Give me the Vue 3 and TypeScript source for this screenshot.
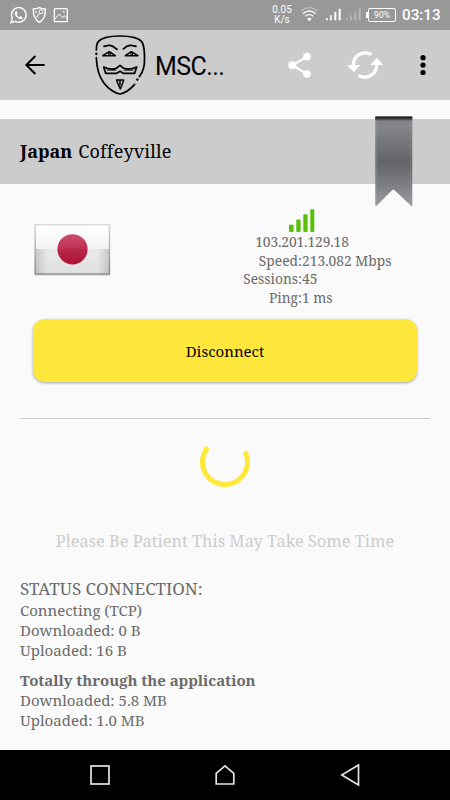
<script setup lang="ts">
interface Stat {
  label: string
  value: string
}

const stats: Stat[] = [
  { label: 'Speed:', value: '213.082 Mbps' },
  { label: 'Sessions:', value: '45' },
  { label: 'Ping:', value: '1 ms' },
]
const session: string[] = ['Connecting (TCP)', 'Downloaded: 0 B', 'Uploaded: 16 B']
const totals: string[] = ['Downloaded: 5.8 MB', 'Uploaded: 1.0 MB']
</script>

<template>
  <div class="screen">
    <header class="status">
      <div class="notices">
        <svg width="64" height="22" viewBox="24 12 192 66" fill="none" stroke="#fff" stroke-width="4">
          <path d="M33 68l4-13a22 22 0 1 1 9 9z" />
          <path d="M47 34c-5 4-3 12 4 18s15 9 18 2l-7-6-4 4c-4-2-7-5-8-9l3-3-3-7z" fill="#fff" stroke="none" />
          <path d="M118 23c7 4 12 4 18 4 1 18-4 32-18 40-14-8-19-22-18-40 6 0 11 0 18-4z" />
          <circle cx="123" cy="35" r="6" stroke-width="3" />
          <path d="M119 40l-11 13M112 49l4 4M104 34l8 5" stroke-width="3" />
          <rect x="163" y="26" width="39" height="39" rx="3" />
          <path d="M165 57l13-15 10 11 5-6 8 9" stroke-width="3" />
          <circle cx="191" cy="35" r="2.5" fill="#fff" stroke="none" />
        </svg>
      </div>
      <div class="indicators">
        <div class="rate"><span>0.05</span><span>K/s</span></div>
        <svg class="radio" width="62" height="18" viewBox="225 20 186 54">
          <g fill="none" stroke="#fff" stroke-width="4">
            <path d="M228 35q25-20 50 0" opacity=".4" />
            <path d="M234 43q19-16 38 0" />
            <path d="M241 51q12-10 24 0" />
          </g>
          <path d="M246 58q7-5 14 0l-7 8z" fill="#fff" />
          <path d="M303 56h5v7h-5zM315 48h5v15h-5zM328 38h6v25h-6zM341 28h6v35h-6z" fill="#fff" />
          <path d="M363 56h5v7h-5zM375 48h5v15h-5zM388 38h6v25h-6zM401 28h6v35h-6z" fill="#fff" opacity=".32" />
        </svg>
        <div class="battery">90%</div>
        <div class="clock">03:13</div>
      </div>
    </header>

    <nav class="toolbar">
      <svg class="back" width="22" height="22" viewBox="73 162 66 66" fill="none" stroke="#000" stroke-width="6">
        <path d="M135 195H81M107 168l-27 27 27 27" />
      </svg>
      <svg class="mask" width="52" height="62" viewBox="27 12 156 186" fill="none" stroke="#000" stroke-width="5.2" stroke-linecap="round" stroke-linejoin="round">
        <path d="M34 60c0-9 1-18 5-24 10-13 38-18 66-18s56 5 66 18c9 15 9 60 5 77-3 13-8 21-13 27" />
        <path d="M34 83c1 29 8 56 22 75 15 20 37 33 49 34 14-3 31-14 44-29" />
        <path d="M34 71v1M157 149l.5-.5" stroke-width="7" />
        <path d="M57 49l14-3c10-1 16 4 25 12M115 57c8-8 15-12 24-11l14 3" />
        <path d="M53 77l20-12 18 12zM121 77l18-12 20 12z" stroke-width="4.500" />
        <circle cx="73" cy="72" r="3" stroke-width="3" />
        <circle cx="140" cy="72" r="3" stroke-width="3" />
        <path d="M56 111c14 7 30 7 38 4l11-9 11 9c9 3 25 3 39-4l-6 19h-34l-10-6-10 6H62z" />
        <path d="M66 121h26M118 121h26" stroke-width="2" />
        <path d="M95 150h21l-4 12-6 15-7-15zM105 152v12" stroke-width="4.500" />
      </svg>
      <h1>MSC...</h1>
      <svg class="share" width="24" height="27" viewBox="190 155 72 81" fill="#fff" stroke="#fff">
        <path d="M247 169l-44 26 44 26" fill="none" stroke-width="7" />
        <g stroke="none"><circle cx="247" cy="169" r="11.5" /><circle cx="203" cy="195" r="12" /><circle cx="247" cy="221" r="11.5" /></g>
      </svg>
      <svg class="refresh" width="38" height="30" viewBox="363 150 114 90" fill="none" stroke="#fff" stroke-width="10">
        <path d="M385 198c-1-25 18-42 41-39q7 1 13 5" />
        <path d="M455 192c1 25-18 42-41 39q-7-1-13-5" />
        <path d="M366 195h40l-20 21zM435 195h40l-19-21z" fill="#fff" stroke="none" />
      </svg>
      <svg class="more" width="6" height="22" viewBox="0 0 6 22"><circle cx="3" cy="3.700" r="2.600" /><circle cx="3" cy="11.100" r="2.600" /><circle cx="3" cy="18.500" r="2.600" /></svg>
    </nav>

    <section class="place">
      <b>Japan</b><span>Coffeyville</span>
      <svg class="ribbon" width="38" height="91" viewBox="0 0 38 91">
        <defs>
          <linearGradient id="cloth" x1="0" y1="0" x2="0" y2="1">
            <stop offset="0" stop-color="#77787b" />
            <stop offset=".1" stop-color="#85868a" />
            <stop offset=".5" stop-color="#636468" />
            <stop offset=".78" stop-color="#7f8085" />
            <stop offset="1" stop-color="#9a9b9f" />
          </linearGradient>
        </defs>
        <path d="M.3 .5h37v89.500h-1L19.300 74Q18.300 73 17.300 74L1.300 90h-1z" fill="url(#cloth)" />
        <path d="M.3 .5h37v2.200H.3z" fill="#1d1e20" />
        <path d="M.3 2.700h37v1.500H.3z" fill="#505154" />
        <path d="M1.800 5v81M35.800 5v81" stroke="#a4a5a8" stroke-width=".7" stroke-dasharray="1.300 1.300" />
      </svg>
    </section>

    <main>
      <section class="server">
        <svg class="flag" width="78" height="54" viewBox="0 0 78 54">
          <defs>
            <linearGradient id="paper" x1="0" y1="0" x2="0" y2="1">
              <stop offset="0" stop-color="#fff" /><stop offset=".48" stop-color="#f3f3f3" />
              <stop offset=".5" stop-color="#e9e9e9" /><stop offset="1" stop-color="#e0e0e0" />
            </linearGradient>
            <linearGradient id="edge" x1="0" y1="0" x2="0" y2="1">
              <stop offset="0" stop-color="#d5d5d5" /><stop offset="1" stop-color="#858585" />
            </linearGradient>
            <linearGradient id="sun" x1="0" y1="0" x2="0" y2="1">
              <stop offset="0" stop-color="#cc4e6c" /><stop offset=".49" stop-color="#bd2f53" />
              <stop offset=".51" stop-color="#b8274a" /><stop offset="1" stop-color="#ac1237" />
            </linearGradient>
            <linearGradient id="shade">
              <stop offset="0" stop-color="#888" stop-opacity=".35" /><stop offset=".16" stop-color="#888" stop-opacity="0" />
              <stop offset=".84" stop-color="#888" stop-opacity="0" /><stop offset="1" stop-color="#888" stop-opacity=".35" />
            </linearGradient>
          </defs>
          <rect x="1.400" y="2" width="76" height="51" rx="1" fill="#000" opacity=".1" />
          <rect x="2.500" y="2" width="74" height="49" fill="url(#paper)" />
          <rect x="2.500" y="26" width="74" height="25" fill="url(#shade)" />
          <rect x="2.200" y="1.700" width="74.200" height="49.300" fill="none" stroke="url(#edge)" stroke-width="1.300" />
          <circle cx="39.500" cy="26.300" r="15.100" fill="url(#sun)" />
        </svg>
        <div class="info">
          <svg class="bars" width="26" height="23" viewBox="0 0 26 23" fill="#5bbf0a">
            <rect x="0" y="15.700" width="4.600" height="7.200" rx="1" /><rect x="7.300" y="10.500" width="4.300" height="12.400" rx="1" />
            <rect x="14.300" y="5.300" width="4.300" height="17.600" rx="1" /><rect x="21.300" y=".3" width="4" height="22.600" rx="1" />
          </svg>
          <div class="ip">103.201.129.18</div>
          <dl>
            <template v-for="s in stats" :key="s.label">
              <dt>{{ s.label }}</dt>
              <dd>{{ s.value }}</dd>
            </template>
          </dl>
        </div>
      </section>

      <button class="action" type="button">Disconnect</button>
      <hr />
      <svg class="spinner" width="52" height="52" viewBox="0 0 52 52" fill="none" stroke="#ffe83b" stroke-width="5">
        <path d="M8.900 11.300A22.500 22.500 0 1 0 46 15.700" />
      </svg>
      <p class="wait">Please Be Patient This May Take Some Time</p>

      <section class="report">
        <h2>STATUS CONNECTION:</h2>
        <p v-for="line in session" :key="line">{{ line }}</p>
        <h3>Totally through the application</h3>
        <p v-for="line in totals" :key="line">{{ line }}</p>
      </section>
    </main>

    <footer class="keys">
      <svg viewBox="0 0 24 24"><rect x="3" y="3" width="18" height="18" /></svg>
      <svg viewBox="0 0 24 24"><path d="M3.200 21V10.300L12 2.800l8.800 7.500V21z" /></svg>
      <svg viewBox="0 0 24 24"><path d="M20.500 2v20L3.800 12z" /></svg>
    </footer>
  </div>
</template>

<style>
body {
  margin: 0;
  background: #fafafa;
}
</style>

<style scoped>
.screen {
  width: 450px;
  height: 800px;
  display: flex;
  flex-direction: column;
  overflow: hidden;
  background: #fafafa;
  color: #6b6b6b;
  font-family: "Noto Serif", "DejaVu Serif Condensed", serif;
}
svg {
  display: block;
  flex: none;
}
h1, h2, h3, p, dl, dd {
  margin: 0;
  font-weight: 400;
}
.status {
  height: 30px;
  flex: none;
  display: flex;
  justify-content: space-between;
  align-items: center;
  padding: 0 10px 0 8px;
  background: #989898;
  color: #fff;
  font-family: Roboto, sans-serif;
}
.indicators {
  display: flex;
  align-items: center;
}
.rate {
  display: flex;
  flex-direction: column;
  align-items: center;
  width: 20px;
  margin-right: 8px;
  font-size: 10px;
  line-height: 10px;
}
.battery {
  position: relative;
  box-sizing: border-box;
  width: 28px;
  height: 14px;
  margin: 0 6px 0 6px;
  border: 1px solid #fff;
  border-radius: 2px;
  font-size: 8.500px;
  line-height: 12px;
  text-align: center;
}
.battery::before {
  content: "";
  position: absolute;
  left: -3px;
  top: 3px;
  width: 1.500px;
  height: 6px;
  background: #fff;
}
.clock {
  width: 38px;
  font-size: 15.200px;
  font-weight: 500;
  white-space: nowrap;
}
.toolbar {
  height: 70px;
  flex: none;
  display: flex;
  align-items: center;
  padding: 0 24px;
  background: #ccc;
}
.mask {
  margin-left: 48px;
}
h1 {
  width: 124px;
  margin-left: 9px;
  padding-top: 3px;
  color: #000;
  font: 400 25px/32px Roboto, sans-serif;
  letter-spacing: -0.600px;
}
.share {
  margin-left: 9px;
}
.refresh {
  margin-left: 34px;
}
.more {
  margin-left: 35.500px;
}
.place {
  position: relative;
  height: 64.500px;
  flex: none;
  display: flex;
  align-items: center;
  margin-top: 19px;
  padding: 0 20px;
  background: #ccc;
  color: #000;
  font-size: 18px;
}
.place span {
  margin-left: 6px;
  letter-spacing: 0.150px;
}
.ribbon {
  position: absolute;
  right: 37px;
  top: -3px;
}
main {
  flex: 1;
  min-height: 0;
  display: flex;
  flex-direction: column;
  padding: 25.500px 20px 0;
}
.server {
  height: 110px;
  flex: none;
  display: flex;
  align-items: flex-start;
}
.flag {
  margin: 14px 0 0 13px;
}
.info {
  width: 164px;
  margin-left: 109px;
  display: flex;
  flex-direction: column;
  align-items: center;
  font-size: 13.800px;
  line-height: 18.700px;
}
.ip {
  margin-top: 1px;
  letter-spacing: -0.120px;
}
dl {
  display: grid;
  grid-template-columns: 82px 82px;
  white-space: nowrap;
}
dt {
  text-align: right;
}
.action {
  height: 63px;
  flex: none;
  margin: 0 13px;
  padding: 0;
  border: 0;
  border-radius: 12px;
  background: #ffe83b;
  box-shadow: 0 1px 3px rgba(0, 0, 0, 0.36);
  color: #000;
  font: 15px/20px "Noto Serif", "DejaVu Serif Condensed", serif;
}
hr {
  width: 100%;
  height: 1px;
  flex: none;
  margin: 36px 0 0;
  border: 0;
  background: #ccc;
}
.spinner {
  margin: 16.500px auto 0;
}
.wait {
  margin-top: 41.500px;
  color: #ccc;
  font-size: 16.350px;
  line-height: 24px;
  text-align: center;
  white-space: nowrap;
}
.report {
  margin-top: 23.500px;
  font-size: 15px;
  line-height: 20px;
}
h2 {
  margin-bottom: -1px;
  font-size: 17px;
  line-height: 24px;
}
h3 {
  margin-top: 10px;
  font-size: 15px;
  font-weight: 700;
  letter-spacing: -0.050px;
}
.keys {
  height: 50px;
  flex: none;
  display: flex;
  justify-content: space-between;
  align-items: center;
  padding: 0 88px;
  background: #000;
}
.keys svg {
  width: 24px;
  height: 24px;
  fill: none;
  stroke: #e4e4e4;
  stroke-width: 1.700;
}
</style>
